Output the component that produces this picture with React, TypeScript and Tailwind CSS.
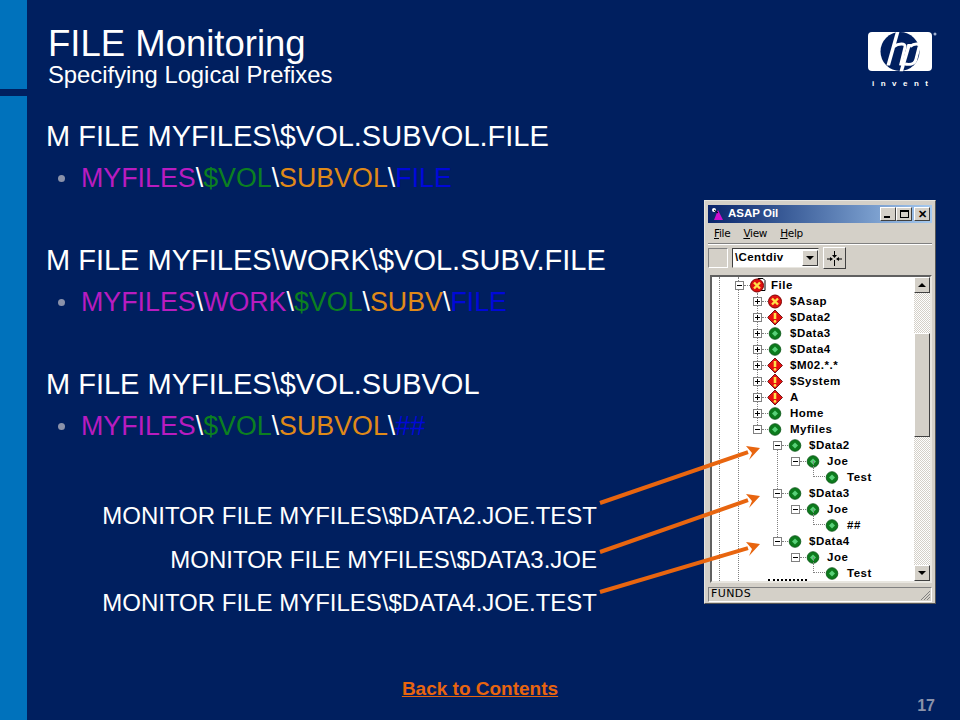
import React from "react";

type Kind = "file" | "x" | "warn" | "ok";

function StatusIcon({ kind }: { kind: Kind }) {
  if (kind === "file" || kind === "x") {
    return (
      <svg width="16" height="15" viewBox="0 0 16 15" className="shrink-0">
        {kind === "file" && <path d="M8 0.5h5l2 2v10h-6z" fill="#fff" stroke="#000" strokeWidth="1" />}
        <circle cx="7" cy="7.5" r="6.5" fill="#e01010" stroke="#800000" strokeWidth="1" />
        <path d="M4 4.5l6 6M10 4.5l-6 6" stroke="#ffe14a" strokeWidth="2.4" />
      </svg>
    );
  }
  if (kind === "warn") {
    return (
      <svg width="16" height="15" viewBox="0 0 16 15" className="shrink-0">
        <path d="M7 0L14.5 7.5L7 15L-0.5 7.5Z" fill="#e81010" stroke="#500" strokeWidth="0.8" />
        <path d="M7 3v6" stroke="#ffe14a" strokeWidth="2.6" />
        <circle cx="7" cy="11.4" r="1.4" fill="#ffe14a" />
      </svg>
    );
  }
  return (
    <svg width="16" height="15" viewBox="0 0 16 15" className="shrink-0">
      <circle cx="7" cy="7.5" r="5.8" fill="#0c7a1c" stroke="#045010" strokeWidth="0.8" />
      <path d="M7 4.5l3 3-3 3-3-3z" fill="#58d078" />
    </svg>
  );
}

function Expander({ open }: { open: boolean }) {
  return (
    <span className="relative w-[9px] h-[9px] shrink-0 border border-[#808080] bg-white flex items-center justify-center">
      <span className="w-[5px] h-px bg-black" />
      {!open && <span className="absolute w-px h-[5px] bg-black" />}
    </span>
  );
}

type Row = { label: string; kind: Kind; open?: boolean; cls: string; leaf?: boolean; labelCls: string };

const rows: Row[] = [
  { label: "File", kind: "file", open: true, cls: "pl-[23px]", labelCls: "ml-[5px]" },
  { label: "$Asap", kind: "x", open: false, cls: "pl-[41px]", labelCls: "ml-[6px]" },
  { label: "$Data2", kind: "warn", open: false, cls: "pl-[41px]", labelCls: "ml-[6px]" },
  { label: "$Data3", kind: "ok", open: false, cls: "pl-[41px]", labelCls: "ml-[6px]" },
  { label: "$Data4", kind: "ok", open: false, cls: "pl-[41px]", labelCls: "ml-[6px]" },
  { label: "$M02.*.*", kind: "warn", open: false, cls: "pl-[41px]", labelCls: "ml-[6px]" },
  { label: "$System", kind: "warn", open: false, cls: "pl-[41px]", labelCls: "ml-[6px]" },
  { label: "A", kind: "warn", open: false, cls: "pl-[41px]", labelCls: "ml-[6px]" },
  { label: "Home", kind: "ok", open: false, cls: "pl-[41px]", labelCls: "ml-[6px]" },
  { label: "Myfiles", kind: "ok", open: true, cls: "pl-[41px]", labelCls: "ml-[6px]" },
  { label: "$Data2", kind: "ok", open: true, cls: "pl-[61px]", labelCls: "ml-[5px]" },
  { label: "Joe", kind: "ok", open: true, cls: "pl-[79px]", labelCls: "ml-[5px]" },
  { label: "Test", kind: "ok", leaf: true, cls: "pl-[113px]", labelCls: "ml-[6px]" },
  { label: "$Data3", kind: "ok", open: true, cls: "pl-[61px]", labelCls: "ml-[5px]" },
  { label: "Joe", kind: "ok", open: true, cls: "pl-[79px]", labelCls: "ml-[5px]" },
  { label: "##", kind: "ok", leaf: true, cls: "pl-[113px]", labelCls: "ml-[6px]" },
  { label: "$Data4", kind: "ok", open: true, cls: "pl-[61px]", labelCls: "ml-[5px]" },
  { label: "Joe", kind: "ok", open: true, cls: "pl-[79px]", labelCls: "ml-[5px]" },
  { label: "Test", kind: "ok", leaf: true, cls: "pl-[113px]", labelCls: "ml-[6px]" },
];

function TreeRow({ row }: { row: Row }) {
  return (
    <div className={`relative flex items-center h-4 ${row.cls}`}>
      {!row.leaf && (
        <>
          <Expander open={!!row.open} />
          <span className="w-[6px] border-t border-dotted border-[#808080] shrink-0" />
        </>
      )}
      {row.leaf && (
        <span className="absolute left-[101px] top-[-8px] w-[12px] h-4 border-l border-b border-dotted border-[#808080]" />
      )}
      <StatusIcon kind={row.kind} />
      <span className={`mt-[2px] text-[11.5px] font-bold tracking-[0.5px] text-black whitespace-pre [font-family:'Liberation_Sans',sans-serif] ${row.labelCls}`}>
        {row.label}
      </span>
    </div>
  );
}

function WinButton({ children }: { children: React.ReactNode }) {
  return (
    <span className="w-4 h-[14px] bg-[#d4d0c8] border border-t-white border-l-white border-r-[#404040] border-b-[#404040] flex items-center justify-center">
      {children}
    </span>
  );
}

function TriUp() {
  return <span className="w-0 h-0 border-x-[4px] border-x-transparent border-b-[4px] border-b-black" />;
}
function TriDown() {
  return <span className="w-0 h-0 border-x-[4px] border-x-transparent border-t-[4px] border-t-black" />;
}

function AppWindow() {
  return (
    <div className="w-[232px] h-[404px] bg-[#d4d0c8] border border-t-[#e8e6e0] border-l-[#e8e6e0] border-r-[#555] border-b-[#555] pt-[3px] px-[3px] flex flex-col [font-family:'Liberation_Sans',sans-serif]">
      <div className="h-[18px] shrink-0 bg-gradient-to-r from-[#0a246a] to-[#a6caf0] flex items-center pl-[3px] pr-[2px] mt-px">
        <svg width="14" height="14" viewBox="0 0 14 14" className="shrink-0">
          <path d="M7 3L12 13H3Z" fill="#d010d0" />
          <circle cx="3" cy="3" r="2" fill="#fff" />
          <path d="M3 3l4 3" stroke="#000" strokeWidth="1" />
        </svg>
        <span className="ml-[3px] text-[11.5px] font-bold text-white [font-family:'Liberation_Sans',sans-serif]">ASAP Oil</span>
        <span className="flex-1" />
        <WinButton><span className="w-[6px] h-[2px] bg-black mt-[6px] mr-[2px]" /></WinButton>
        <WinButton><span className="w-[9px] h-[8px] border border-black border-t-2" /></WinButton>
        <span className="w-[2px]" />
        <WinButton><span className="text-[11px] leading-none font-bold text-black">✕</span></WinButton>
      </div>
      <div className="h-[19px] mt-[1px] flex items-center gap-[13px] pl-[6px] text-[10.5px] text-black shrink-0 [font-family:'DejaVu_Sans',sans-serif] tracking-[-0.3px]">
        <span><u>F</u>ile</span>
        <span><u>V</u>iew</span>
        <span><u>H</u>elp</span>
      </div>
      <div className="h-px bg-[#808080] border-b border-white box-content shrink-0" />
      <div className="h-[22px] mt-[2px] flex items-center shrink-0">
        <span className="w-5 h-5 border border-t-[#808080] border-l-[#808080] border-r-white border-b-white" />
        <div className="ml-1 w-[87px] h-5 bg-white border border-t-[#404040] border-l-[#404040] border-r-[#e8e6e0] border-b-[#e8e6e0] flex items-center pl-[2px]">
          <span className="text-[11.5px] font-bold text-black tracking-[0.4px] [font-family:'Liberation_Sans',sans-serif] flex-1">\Centdiv</span>
          <span className="w-4 h-4 bg-[#d4d0c8] border border-t-white border-l-white border-r-[#404040] border-b-[#404040] flex items-center justify-center"><TriDown /></span>
        </div>
        <span className="ml-1 w-[23px] h-[22px] border border-t-white border-l-white border-r-[#404040] border-b-[#404040] flex items-center justify-center">
          <svg width="15" height="15" viewBox="0 0 15 15">
            <path d="M7.5 0v4M7.5 9v6M0 8h4M10 8h5" stroke="#000" strokeWidth="1" />
            <path d="M5 4h5l-2.5 3zM3 6l3 2-3 2zM12 6l-3 2 3 2z" fill="#000" />
          </svg>
        </span>
      </div>
      <div className="relative mt-[6px] h-[308px] shrink-0 ml-[2px] bg-white border-2 border-t-[#606060] border-l-[#606060] border-r-[#e8e6e0] border-b-[#e8e6e0] flex overflow-hidden">
        <div className="relative flex-1">
          <span className="absolute left-[7px] top-0 bottom-0 border-l border-dotted border-[#808080]" />
          <span className="absolute left-[26px] top-0 bottom-0 border-l border-dotted border-[#808080]" />
          <span className="absolute left-[45px] top-[16px] h-[136px] border-l border-dotted border-[#808080]" />
          <span className="absolute left-[65px] top-[173px] h-[91px] border-l border-dotted border-[#808080]" />
          <span className="absolute left-[56px] bottom-0 w-[39px] border-t-2 border-dotted border-black" />
          {rows.map((r, i) => (
            <TreeRow key={i} row={r} />
          ))}
        </div>
        <div className="w-4 shrink-0 flex flex-col bg-[repeating-conic-gradient(#d4d0c8_0%_25%,#ffffff_0%_50%)] bg-[length:2px_2px]">
          <span className="h-4 shrink-0 bg-[#d4d0c8] border border-t-white border-l-white border-r-[#404040] border-b-[#404040] flex items-center justify-center"><TriUp /></span>
          <span className="h-[40px] shrink-0" />
          <span className="h-[104px] shrink-0 bg-[#d4d0c8] border border-t-white border-l-white border-r-[#404040] border-b-[#404040]" />
          <span className="flex-1" />
          <span className="h-4 shrink-0 bg-[#d4d0c8] border border-t-white border-l-white border-r-[#404040] border-b-[#404040] flex items-center justify-center"><TriDown /></span>
        </div>
      </div>
      <div className="relative mt-[4px] h-[15px] border border-t-[#808080] border-l-[#808080] border-r-white border-b-white flex items-center pl-[2px] shrink-0">
        <span className="text-[11px] text-black tracking-[0.4px] [font-family:'DejaVu_Sans',sans-serif]">FUNDS</span>
        <svg width="12" height="12" viewBox="0 0 12 12" className="absolute right-0 bottom-0">
          <path d="M11 2L2 11M11 5L5 11M11 8L8 11" stroke="#808080" strokeWidth="1" />
        </svg>
      </div>
    </div>
  );
}

function HpLogo() {
  return (
    <div className="w-[70px] flex flex-col items-start">
      <svg width="70" height="41" viewBox="0 0 70 41">
        <rect x="0" y="0" width="64" height="39" rx="4" fill="#fff" />
        <circle cx="32" cy="19.5" r="19.5" fill="#001f5f" />
        <path d="M27.8 0h3.6L22 33.5h-3.6z" fill="#fff" />
        <path d="M26 14.5C30 11.5 38 10.5 37 15L32.5 33.5" fill="none" stroke="#fff" strokeWidth="3" />
        <path d="M39.5 12h3.6l-8 27.2h-3.6z" fill="#fff" />
        <path d="M42 14.5C46 11.5 52 10.5 51 15L48 27C47 32 42 33 37 32" fill="none" stroke="#fff" strokeWidth="3" />
        <circle cx="67" cy="2" r="1.5" fill="#9fb0d0" />
      </svg>
      <span className="mt-[6px] ml-[4px] w-[56px] flex justify-between text-[8px] leading-[10px] font-bold text-white [font-family:'Liberation_Sans',sans-serif]">
        <span>i</span><span>n</span><span>v</span><span>e</span><span>n</span><span>t</span>
      </span>
    </div>
  );
}

function Path({ parts }: { parts: { t: string; c: string }[] }) {
  return (
    <div className="h-[42px] pl-[31px] flex items-center text-[26.8px] leading-[42px] whitespace-pre">
      <span className="w-[7px] h-[7px] rounded-full bg-[#8a92aa] mr-[16px] shrink-0" />
      {parts.map((p, i) => (
        <span key={i} className={p.c}>{p.t}</span>
      ))}
    </div>
  );
}

const M = "text-[#b81cc0]";
const G = "text-[#0c8020]";
const O = "text-[#e08a18]";
const B = "text-[#0008d8]";
const W = "text-white";

export default function App() {
  return (
    <div className="relative w-[960px] h-[720px] overflow-hidden bg-[#001f5f] flex text-white [font-family:'Liberation_Sans',sans-serif]">
      <aside className="w-[27px] shrink-0 flex flex-col">
        <div className="h-[89px] bg-[#0072bc]" />
        <div className="h-[7px]" />
        <div className="flex-1 bg-[#0072bc]" />
      </aside>
      <main className="flex-1 flex flex-col">
        <header className="h-[115px] shrink-0 pl-[21px] pr-[22px] pt-[25px] flex justify-between items-start">
          <div>
            <div className="text-[36.5px] leading-[38px]">FILE Monitoring</div>
            <div className="text-[23.8px] leading-[24px]">Specifying Logical Prefixes</div>
          </div>
          <div className="mt-[7px]"><HpLogo /></div>
        </header>
        <div className="flex h-[555px] shrink-0">
          <div className="w-[570px] shrink-0">
            <div className="h-[42px] pl-[19px] text-[29px] leading-[42px] whitespace-pre">M FILE MYFILES\$VOL.SUBVOL.FILE</div>
            <Path parts={[{ t: "MYFILES", c: M }, { t: "\\", c: W }, { t: "$VOL", c: G }, { t: "\\", c: W }, { t: "SUBVOL", c: O }, { t: "\\", c: W }, { t: "FILE", c: B }]} />
            <div className="mt-10 h-[42px] pl-[19px] text-[29px] leading-[42px] whitespace-pre">M FILE MYFILES\WORK\$VOL.SUBV.FILE</div>
            <Path parts={[{ t: "MYFILES", c: M }, { t: "\\", c: W }, { t: "WORK", c: M }, { t: "\\", c: W }, { t: "$VOL", c: G }, { t: "\\", c: W }, { t: "SUBV", c: O }, { t: "\\", c: W }, { t: "FILE", c: B }]} />
            <div className="mt-10 h-[42px] pl-[19px] text-[29px] leading-[42px] whitespace-pre">M FILE MYFILES\$VOL.SUBVOL</div>
            <Path parts={[{ t: "MYFILES", c: M }, { t: "\\", c: W }, { t: "$VOL", c: G }, { t: "\\", c: W }, { t: "SUBVOL", c: O }, { t: "\\", c: W }, { t: "##", c: B }]} />
            <div className="mt-[47px] text-right text-[24px] leading-[44px]">MONITOR FILE MYFILES\$DATA2.JOE.TEST</div>
            <div className="text-right text-[24px] leading-[43px]">MONITOR FILE MYFILES\$DATA3.JOE</div>
            <div className="text-right text-[24px] leading-[43px]">MONITOR FILE MYFILES\$DATA4.JOE.TEST</div>
          </div>
          <div className="ml-[107px] mt-[85px]"><AppWindow /></div>
        </div>
        <footer className="relative flex-1 flex justify-center pr-[27px]">
          <a className="mt-[9px] h-[20px] text-[19px] leading-[20px] font-bold underline text-[#e8650f]">Back to Contents</a>
          <span className="absolute right-[25px] top-[28px] text-[16px] leading-[16px] font-bold text-[#8a92aa]">17</span>
        </footer>
      </main>
      <svg width="960" height="720" viewBox="0 0 960 720" className="absolute left-0 top-0 pointer-events-none">
        {[
          [600, 503, 760, 448],
          [600, 552, 760, 496],
          [600, 592, 760, 544],
        ].map(([x1, y1, x2, y2], i) => (
          <g key={i}>
            <line x1={x1} y1={y1} x2={x2 - 12} y2={y2 + 4.2} stroke="#e8650f" strokeWidth="4" />
            <polygon points={`${x2},${y2} ${x2 - 11},${y2 + 12} ${x2 - 8},${y2 + 5} ${x2 - 14},${y2 - 2}`} fill="#e8650f" />
          </g>
        ))}
      </svg>
    </div>
  );
}
